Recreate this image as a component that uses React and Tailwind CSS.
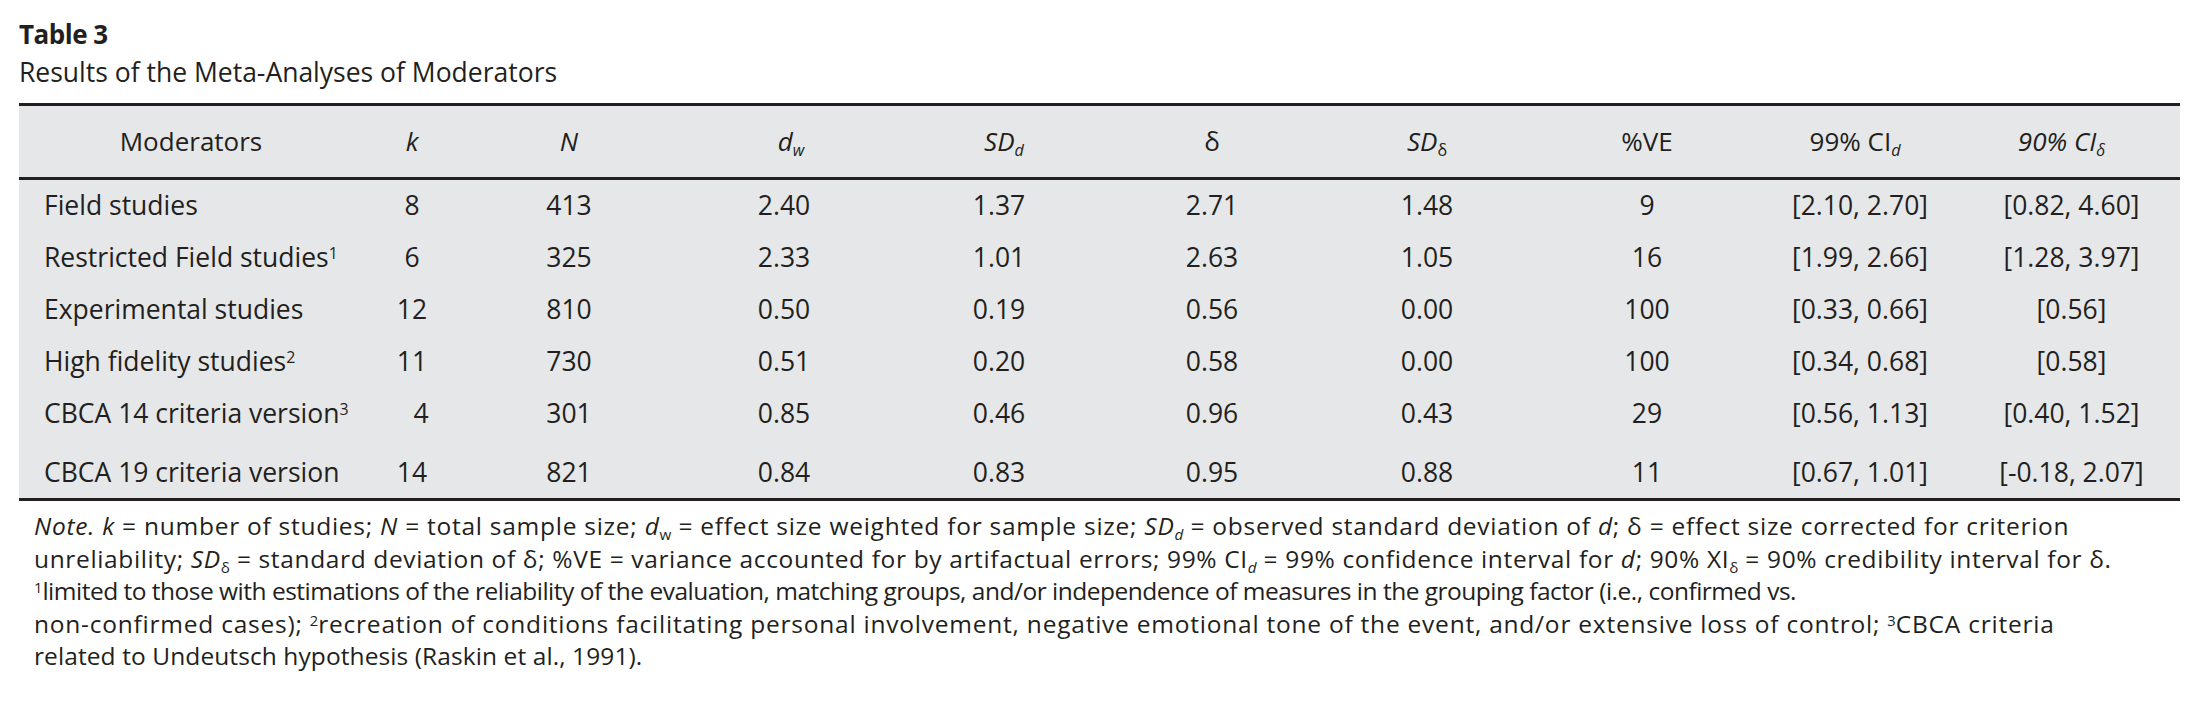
const cols = [
  "w-[344px]",
  "w-[98px]",
  "w-[216px]",
  "w-[214px]",
  "w-[216px]",
  "w-[210px]",
  "w-[220px]",
  "w-[220px]",
  "w-[206px]",
  "w-[217px]",
];

const rows = [
  { label: "Field studies", sup: "", k: "8", n: "413", v: ["2.40", "1.37", "2.71", "1.48", "9", "[2.10, 2.70]", "[0.82, 4.60]"] },
  { label: "Restricted Field studies", sup: "1", k: "6", n: "325", v: ["2.33", "1.01", "2.63", "1.05", "16", "[1.99, 2.66]", "[1.28, 3.97]"] },
  { label: "Experimental studies", sup: "", k: "12", n: "810", v: ["0.50", "0.19", "0.56", "0.00", "100", "[0.33, 0.66]", "[0.56]"] },
  { label: "High fidelity studies", sup: "2", k: "11", n: "730", v: ["0.51", "0.20", "0.58", "0.00", "100", "[0.34, 0.68]", "[0.58]"] },
  { label: "CBCA 14 criteria version", sup: "3", k: "4", n: "301", kShift: true, v: ["0.85", "0.46", "0.96", "0.43", "29", "[0.56, 1.13]", "[0.40, 1.52]"] },
  { label: "CBCA 19 criteria version", sup: "", k: "14", n: "821", v: ["0.84", "0.83", "0.95", "0.88", "11", "[0.67, 1.01]", "[-0.18, 2.07]"] },
];

function Sub({ children, italic }) {
  return (
    <span className={`text-[0.62em] leading-none align-[-0.3em] tracking-normal ${italic ? "italic" : "not-italic"}`}>
      {children}
    </span>
  );
}

function Sup({ children }) {
  return <span className="text-[0.6em] leading-none align-[0.5em] tracking-normal">{children}</span>;
}

export default function App() {
  return (
    <div
      className="w-[2204px] h-[704px] bg-white text-[#231f20] pl-[19px] pt-[16px] overflow-hidden"
      style={{ fontFamily: '"Open Sans", "Liberation Sans", sans-serif' }}
    >
      {/* Caption */}
      <div className="text-[26px] font-bold leading-[37px] tracking-[-0.5px]">Table 3</div>
      <div className="text-[26.5px] leading-[38px]">Results of the Meta-Analyses of Moderators</div>

      {/* Table */}
      <div className="w-[2161px] mt-[12px] bg-[#e6e7e9] border-t-[3px] border-b-[3px] border-[#231f20] text-[26.5px]">
        {/* Header */}
        <div className="flex h-[74px] items-center border-b-[3px] border-[#231f20] text-[26px]">
          <div className={`${cols[0]} text-center`}>Moderators</div>
          <div className={`${cols[1]} text-center italic`}>k</div>
          <div className={`${cols[2]} text-center italic`}>N</div>
          <div className={`${cols[3]} text-center pl-[14px]`}>
            <span className="italic">d</span>
            <Sub italic>w</Sub>
          </div>
          <div className={`${cols[4]} text-center pl-[10px]`}>
            <span className="italic">SD</span>
            <Sub italic>d</Sub>
          </div>
          <div className={`${cols[5]} text-center`}>δ</div>
          <div className={`${cols[6]} text-center`}>
            <span className="italic">SD</span>
            <Sub>δ</Sub>
          </div>
          <div className={`${cols[7]} text-center`}>%VE</div>
          <div className={`${cols[8]} text-center pr-[10px]`}>
            99% CI<Sub italic>d</Sub>
          </div>
          <div className={`${cols[9]} text-center pr-[20px] italic`}>
            90% CI<Sub italic>δ</Sub>
          </div>
        </div>

        {/* Body */}
        <div>
          {rows.map((r, i) => (
            <div
              key={r.label}
              className={`flex items-center ${i === rows.length - 1 ? "h-[58px] pt-[8px]" : "h-[52px]"}`}
            >
              <div className={`${cols[0]} pl-[25px] whitespace-nowrap`}>
                {r.label}
                {r.sup && <Sup>{r.sup}</Sup>}
              </div>
              <div className={`${cols[1]} text-center ${r.kShift ? "pl-[18px]" : ""}`}>{r.k}</div>
              <div className={`${cols[2]} text-center`}>{r.n}</div>
              {r.v.map((val, j) => (
                <div key={j} className={`${cols[j + 3]} text-center whitespace-nowrap`}>
                  {val}
                </div>
              ))}
            </div>
          ))}
        </div>
      </div>

      {/* Notes */}
      <div className="mt-[9px] pl-[15px] text-[24.5px] leading-[32.5px] whitespace-nowrap">
        <div className="tracking-[0.74px]">
          <span className="italic">Note.</span> <span className="italic">k</span> = number of studies;{" "}
          <span className="italic">N</span> = total sample size; <span className="italic">d</span>
          <Sub>w</Sub> = effect size weighted for sample size; <span className="italic">SD</span>
          <Sub italic>d</Sub> = observed standard deviation of <span className="italic">d</span>; δ = effect size
          corrected for criterion
        </div>
        <div className="tracking-[0.64px]">
          unreliability; <span className="italic">SD</span>
          <Sub>δ</Sub> = standard deviation of δ; %VE = variance accounted for by artifactual errors; 99% CI
          <Sub italic>d</Sub> = 99% confidence interval for <span className="italic">d</span>; 90% XI
          <Sub>δ</Sub> = 90% credibility interval for δ.
        </div>
        <div className="tracking-[-0.5px]">
          <Sup>1</Sup>limited to those with estimations of the reliability of the evaluation, matching groups, and/or
          independence of measures in the grouping factor (i.e., confirmed vs.
        </div>
        <div className="tracking-[0.77px]">
          non-confirmed cases); <Sup>2</Sup>recreation of conditions facilitating personal involvement, negative
          emotional tone of the event, and/or extensive loss of control; <Sup>3</Sup>CBCA criteria
        </div>
        <div className="tracking-[0.09px]">related to Undeutsch hypothesis (Raskin et al., 1991).</div>
      </div>
    </div>
  );
}
